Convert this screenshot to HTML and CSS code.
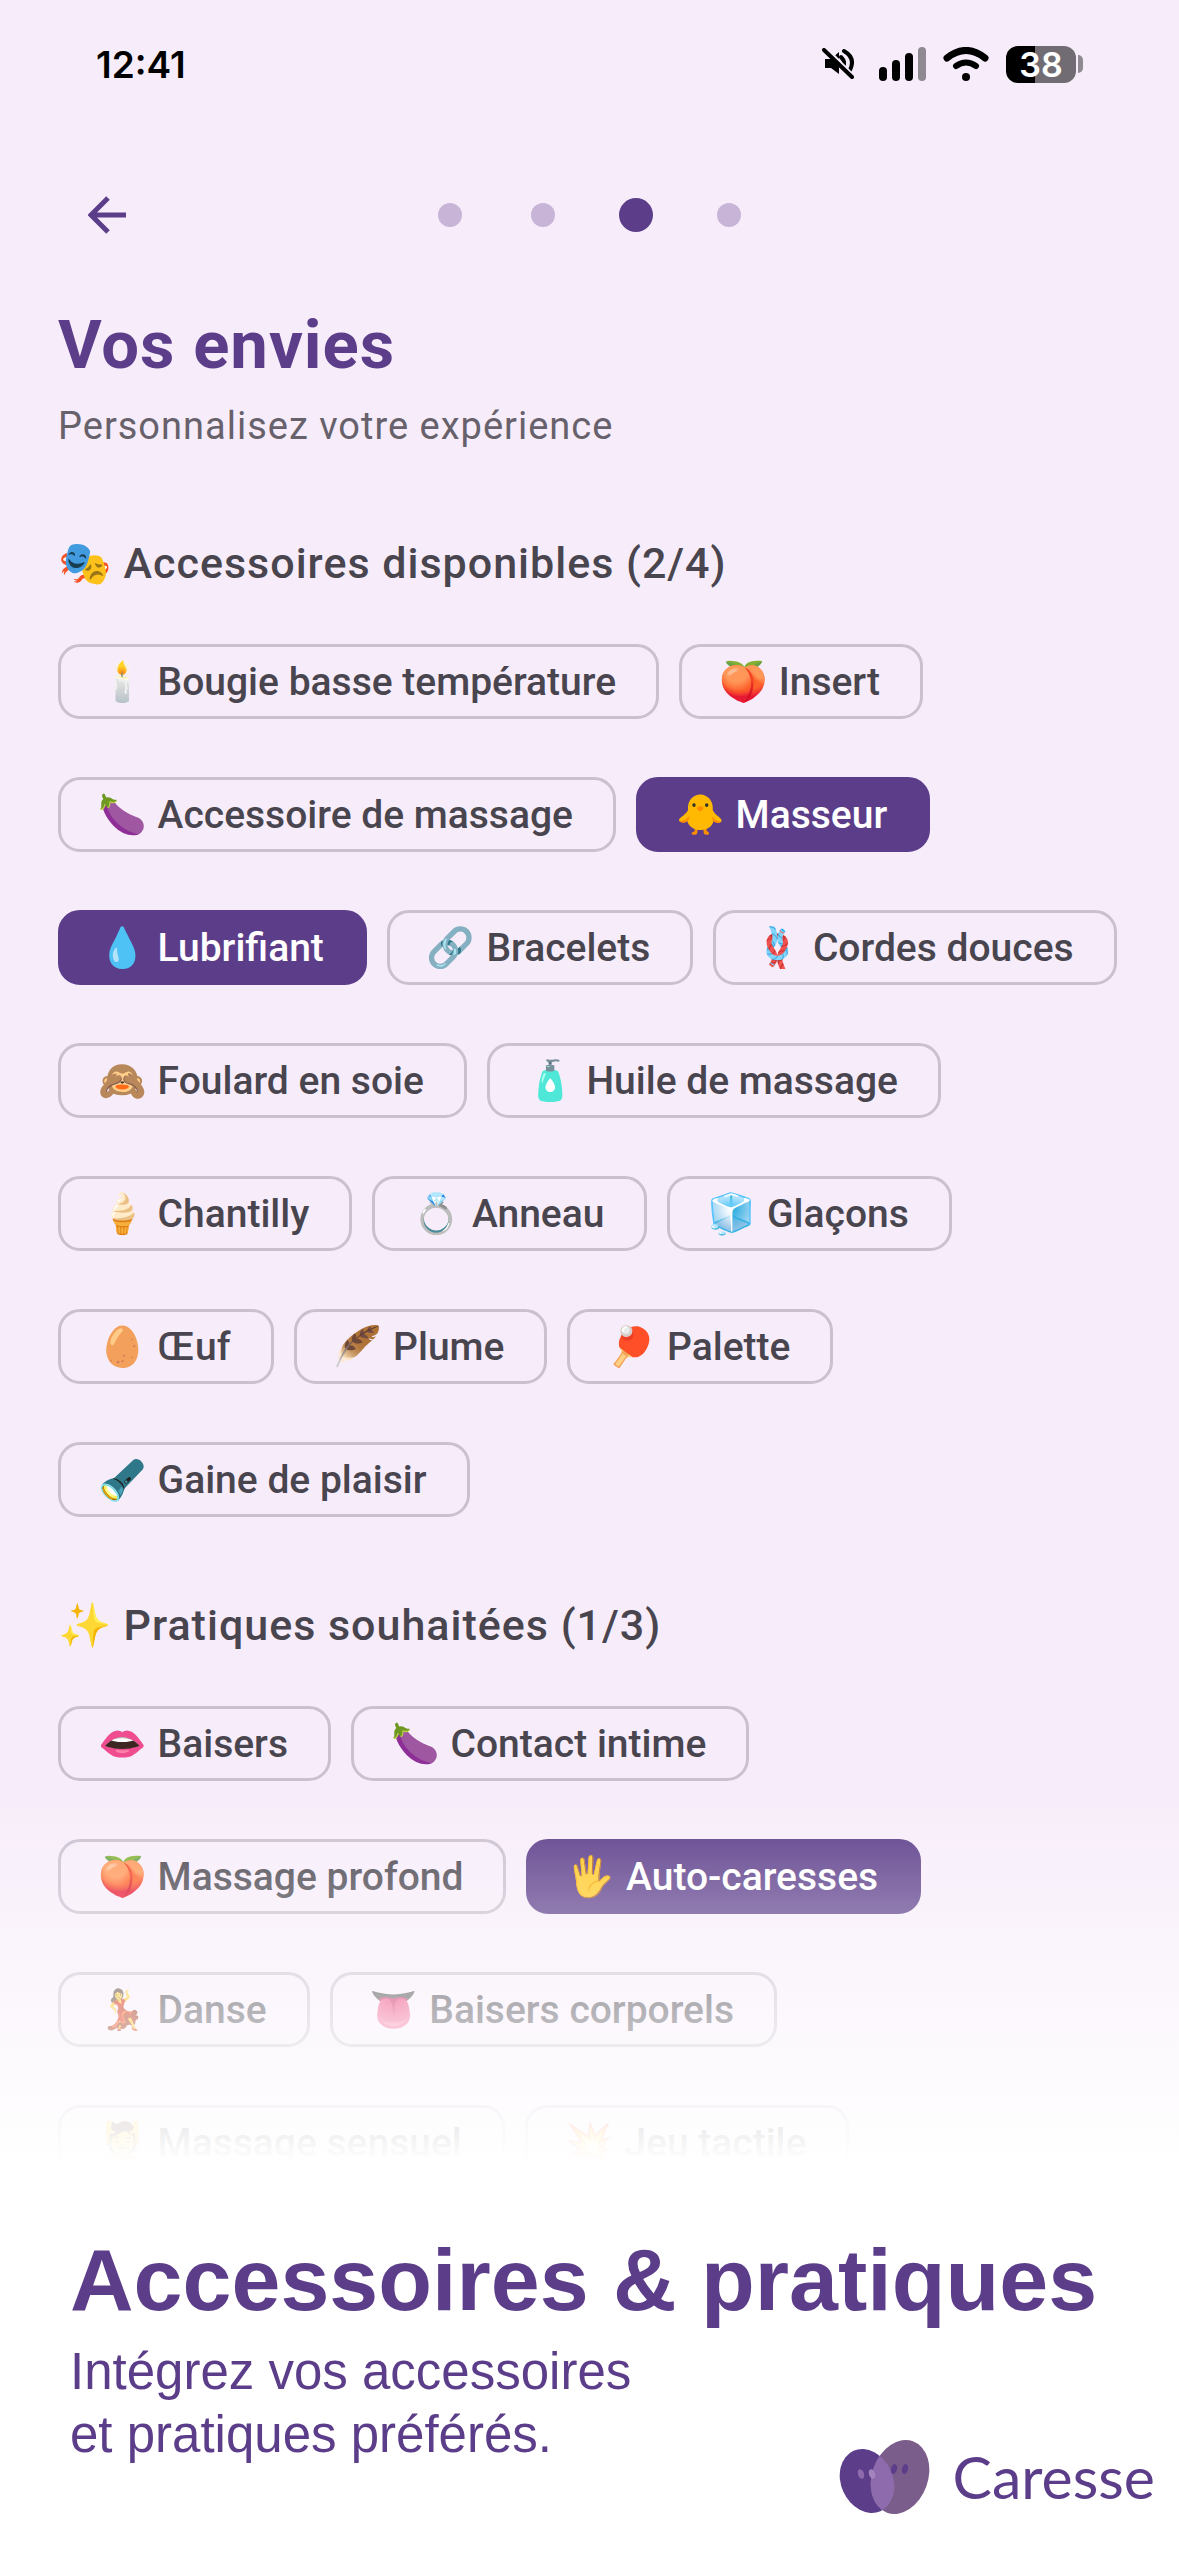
FILE: index.html
```html
<!DOCTYPE html>
<html lang="fr">
<head>
<meta charset="utf-8">
<meta name="viewport" content="width=device-width, initial-scale=1">
<title>Caresse – Vos envies</title>
<link rel="stylesheet" href="styles.css">
</head>
<body>
<main class="app">
  <div class="statusbar">
    <span class="time">12:41</span>
    <div class="indicators">
      <svg class="mute" width="32" height="32" viewBox="0 0 32 32" role="img" aria-label="Silencieux">
        <path d="M3 11h6l8-7v22l-8-6H3z" fill="#000"/>
        <path d="M19 9q5 5 2 11" fill="none" stroke="#000" stroke-width="4" stroke-linecap="round"/>
        <path d="M22 3q12 7 6 19" fill="none" stroke="#000" stroke-width="4" stroke-linecap="round"/>
        <path d="M4 0l28 28" stroke="#f7edfa" stroke-width="3"/>
        <path d="M2 2l28 27" stroke="#000" stroke-width="4" stroke-linecap="round"/>
      </svg>
      <svg width="47" height="34" viewBox="0 0 47 34" role="img" aria-label="Réseau">
        <rect x="0" y="20" width="8" height="14" rx="4"/><rect x="13" y="13" width="8" height="21" rx="4"/><rect x="26" y="6" width="8" height="28" rx="4"/><rect x="39" y="0" width="8" height="34" rx="4" fill="#8f8992"/>
      </svg>
      <svg width="46" height="34" viewBox="0 0 46 34" role="img" aria-label="Wi-Fi">
        <path d="M4 11Q23-4 42 11" fill="none" stroke="#000" stroke-width="7" stroke-linecap="round"/>
        <path d="M13 19q10-7 20 0" fill="none" stroke="#000" stroke-width="6" stroke-linecap="round"/>
        <circle cx="23" cy="30" r="4"/>
      </svg>
      <div class="battery"><span class="level">38</span><span class="tip"></span></div>
    </div>
  </div>

  <header class="topbar">
    <button class="back" type="button" aria-label="Retour">
      <svg width="38" height="38" viewBox="0 0 38 38"><path d="M20 2L3 19l17 17M3 19h35" fill="none" stroke="#5c3d8a" stroke-width="5"/></svg>
    </button>
    <div class="steps"><i></i><i></i><i class="current"></i><i></i></div>
  </header>

  <div class="content">
    <h1>Vos envies</h1>
    <p class="lead">Personnalisez votre expérience</p>

    <h2><span class="emoji">🎭</span>Accessoires disponibles (2/4)</h2>
    <div class="chips">
      <button type="button" class="chip"><span class="emoji">🕯️</span>Bougie basse température</button>
      <button type="button" class="chip"><span class="emoji">🍑</span>Insert</button>
      <button type="button" class="chip"><span class="emoji">🍆</span>Accessoire de massage</button>
      <button type="button" class="chip on"><span class="emoji">🐥</span>Masseur</button>
      <button type="button" class="chip on"><span class="emoji">💧</span>Lubrifiant</button>
      <button type="button" class="chip"><span class="emoji">🔗</span>Bracelets</button>
      <button type="button" class="chip"><span class="emoji">🪢</span>Cordes douces</button>
      <button type="button" class="chip"><span class="emoji">🙈</span>Foulard en soie</button>
      <button type="button" class="chip"><span class="emoji">🧴</span>Huile de massage</button>
      <button type="button" class="chip"><span class="emoji">🍦</span>Chantilly</button>
      <button type="button" class="chip"><span class="emoji">💍</span>Anneau</button>
      <button type="button" class="chip"><span class="emoji">🧊</span>Glaçons</button>
      <button type="button" class="chip"><span class="emoji">🥚</span>Œuf</button>
      <button type="button" class="chip"><span class="emoji mirrored">🪶</span>Plume</button>
      <button type="button" class="chip"><span class="emoji">🏓</span>Palette</button>
      <button type="button" class="chip"><span class="emoji flipped">🔦</span>Gaine de plaisir</button>
    </div>

    <h2><span class="emoji">✨</span>Pratiques souhaitées (1/3)</h2>
    <div class="chips">
      <button type="button" class="chip"><span class="emoji">👄</span>Baisers</button>
      <button type="button" class="chip"><span class="emoji">🍆</span>Contact intime</button>
      <button type="button" class="chip"><span class="emoji">🍑</span>Massage profond</button>
      <button type="button" class="chip on"><span class="emoji">🖐️</span>Auto-caresses</button>
      <button type="button" class="chip"><span class="emoji">💃</span>Danse</button>
      <button type="button" class="chip"><span class="emoji">👅</span>Baisers corporels</button>
      <button type="button" class="chip"><span class="emoji">💆</span>Massage sensuel</button>
      <button type="button" class="chip"><span class="emoji">💥</span>Jeu tactile</button>
    </div>
  </div>
  <div class="fade"></div>
</main>

<footer class="caption">
  <h2>Accessoires &amp; pratiques</h2>
  <div class="caption-row">
    <p>Intégrez vos accessoires<br>et pratiques préférés.</p>
    <div class="brand">
      <svg width="91" height="74" viewBox="0 0 91 74" aria-hidden="true">
        <defs><clipPath id="left"><ellipse cx="28" cy="41" rx="26" ry="33" transform="rotate(-24 28 41)"/></clipPath></defs>
        <ellipse cx="28" cy="41" rx="26" ry="33" transform="rotate(-24 28 41)" fill="#5c3d8a"/>
        <ellipse cx="61" cy="37" rx="28" ry="38" transform="rotate(20 61 37)" fill="#7b5d8b"/>
        <g clip-path="url(#left)"><ellipse cx="61" cy="37" rx="28" ry="38" transform="rotate(20 61 37)" fill="#8e6bac"/></g>
        <ellipse cx="22" cy="34" rx="3" ry="5" transform="rotate(-18 22 34)" fill="#8e6bac"/>
        <ellipse cx="33" cy="34" rx="3" ry="5" transform="rotate(-18 33 34)" fill="#a584bd"/>
        <ellipse cx="55" cy="29" rx="3" ry="5" transform="rotate(14 55 29)" fill="#5c3d8a"/>
        <ellipse cx="66" cy="29" rx="3" ry="5" transform="rotate(14 66 29)" fill="#5c3d8a"/>
      </svg>
      <span>Caresse</span>
    </div>
  </div>
</footer>
</body>
</html>
```

FILE: styles.css
```css
* { box-sizing: border-box; margin: 0; }

body {
  height: 100vh;
  display: flex;
  flex-direction: column;
  background: #fff;
  font-family: Roboto, "Noto Sans", sans-serif;
}

.app {
  position: relative;
  flex: 1;
  min-height: 0;
  overflow: hidden;
  background: #f7edfa;
}

.statusbar {
  display: flex;
  justify-content: space-between;
  align-items: center;
  height: 128px;
  padding: 0 96px;
}
.time { font: 600 37px/1 Inter, sans-serif; color: #000; }
.indicators { display: flex; align-items: center; gap: 17px; }
.mute { margin-right: 8px; }
.battery { display: flex; align-items: center; gap: 2px; }
.level {
  width: 70px;
  border-radius: 12px;
  background: linear-gradient(90deg, #000 41%, #716b73 41%);
  color: #fff;
  font: 600 34px/37px Inter, sans-serif;
  text-align: center;
}
.tip { width: 5px; height: 18px; border-radius: 0 5px 5px 0; background: #8f8992; }

.topbar {
  display: grid;
  grid-template-columns: 1fr auto 1fr;
  align-items: center;
  height: 174px;
  padding: 0 88px;
}
.back { justify-self: start; border: 0; padding: 0; background: none; display: flex; }
.steps { display: flex; align-items: center; gap: 69px; }
.steps i { width: 24px; height: 24px; border-radius: 50%; background: #c8b4d7; }
.steps .current { width: 34px; height: 34px; margin: 0 -5px; background: #5c3d8a; }

.content { padding: 0 58px; color: #49454f; }
h1 { font-size: 67px; line-height: 86px; font-weight: 700; letter-spacing: 1px; color: #5c3d8a; }
.lead { margin-top: 9px; font-size: 38px; line-height: 58px; letter-spacing: 1px; color: #67616c; }
.content h2 {
  margin: 76px 0 49px;
  color: #49454f;
  font-size: 43px;
  line-height: 64px;
  font-weight: 500;
  letter-spacing: 1px;
}
.emoji { display: inline-block; font-family: "Noto Color Emoji", sans-serif; margin-right: 11px; }
.mirrored { transform: scaleX(-1); }
.flipped { transform: scaleY(-1); }

.chips { display: flex; flex-wrap: wrap; gap: 58px 20px; }
.chip {
  display: flex;
  align-items: center;
  height: 75px;
  padding: 0 40px 0 37px;
  border: 3px solid #cac0d0;
  border-radius: 22px;
  background: transparent;
  color: #49454f;
  font: 500 39px/44px Roboto, sans-serif;
  white-space: nowrap;
}
.chip.on { background: #5c3d8a; border-color: #5c3d8a; color: #fff; }

.fade {
  position: absolute;
  inset: auto 0 0 0;
  height: 376px;
  background: linear-gradient(rgba(255, 255, 255, 0), #fff 98%);
}

.caption {
  padding: 60px 24px 30px 70px;
  color: #5c3d8a;
  font-family: "Liberation Sans", Arial, sans-serif;
}
.caption h2 { font-size: 88px; line-height: 100px; font-weight: 700; }
.caption-row { display: flex; justify-content: space-between; }
.caption p { font-size: 51px; line-height: 63px; padding: 10px 0 60px; }
.brand {
  display: flex;
  align-items: center;
  align-self: flex-end;
  gap: 23px;
  margin-bottom: 12px;
  font: 400 59px/64px Lato, sans-serif;
}
```
